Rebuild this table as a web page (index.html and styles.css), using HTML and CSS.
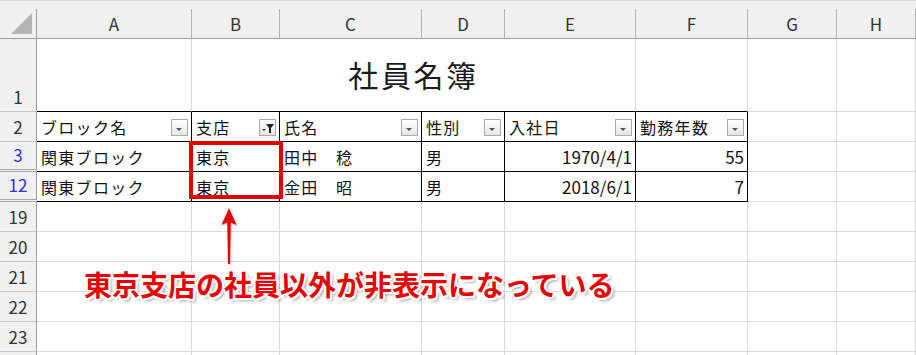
FILE: index.html
```html
<!DOCTYPE html>
<html lang="ja">
<head>
  <meta charset="UTF-8" />
  <meta name="viewport" content="width=device-width, initial-scale=1.0" />
  <title>社員名簿</title>
  <link rel="stylesheet" href="styles.css">
</head>
<body>
  <div class="sheet">
    <div class="grid">
      <!-- 上の余白と列見出し -->
      <div class="strip"></div>
      <div class="corner">
        <svg width="22" height="22" viewBox="0 0 22 22"><polygon points="0,21 21,0 21,21" fill="#b4b4b4"/></svg>
      </div>
      <div class="ch">A</div>
      <div class="ch">B</div>
      <div class="ch">C</div>
      <div class="ch">D</div>
      <div class="ch">E</div>
      <div class="ch">F</div>
      <div class="ch">G</div>
      <div class="ch">H</div>

      <!-- 1行目: タイトル (B1:E1 結合) -->
      <div class="rh">1</div>
      <div class="c top"></div>
      <div class="c top title">社員名簿</div>
      <div class="c top"></div>
      <div class="c"></div>
      <div class="c"></div>

      <!-- 2行目: 見出し + フィルターボタン -->
      <div class="rh">2</div>
      <div class="c t head">ブロック名<span class="fbtn"><svg width="15" height="15" viewBox="0 0 15 15"><polygon points="4,8 10,8 7,11" fill="#555"/></svg></span></div>
      <div class="c t head">支店<span class="fbtn"><svg width="15" height="15" viewBox="0 0 15 15"><polygon points="2,9 6,9 4,11" fill="#333"/><polygon points="6,4 14,4 11,8 11,13 9,13 9,8" fill="#222"/></svg></span></div>
      <div class="c t head">氏名<span class="fbtn"><svg width="15" height="15" viewBox="0 0 15 15"><polygon points="4,8 10,8 7,11" fill="#555"/></svg></span></div>
      <div class="c t head">性別<span class="fbtn"><svg width="15" height="15" viewBox="0 0 15 15"><polygon points="4,8 10,8 7,11" fill="#555"/></svg></span></div>
      <div class="c t head">入社日<span class="fbtn"><svg width="15" height="15" viewBox="0 0 15 15"><polygon points="4,8 10,8 7,11" fill="#555"/></svg></span></div>
      <div class="c t head">勤務年数<span class="fbtn"><svg width="15" height="15" viewBox="0 0 15 15"><polygon points="4,8 10,8 7,11" fill="#555"/></svg></span></div>
      <div class="c"></div>
      <div class="c"></div>

      <!-- データ行 (4〜11行目は非表示) -->
      <div class="rh shown hid">3</div>
      <div class="c t">関東ブロック</div>
      <div class="c t">東京</div>
      <div class="c t">田中　稔</div>
      <div class="c t">男</div>
      <div class="c t num">1970/4/1</div>
      <div class="c t num">55</div>
      <div class="c"></div>
      <div class="c"></div>

      <div class="rh shown hid">12</div>
      <div class="c t">関東ブロック</div>
      <div class="c t">東京</div>
      <div class="c t">金田　昭</div>
      <div class="c t">男</div>
      <div class="c t num">2018/6/1</div>
      <div class="c t num">7</div>
      <div class="c"></div>
      <div class="c"></div>

      <div class="rh">19</div>
      <div class="c"></div><div class="c"></div><div class="c"></div><div class="c"></div>
      <div class="c"></div><div class="c"></div><div class="c"></div><div class="c"></div>

      <div class="rh">20</div>
      <div class="c"></div><div class="c"></div><div class="c"></div><div class="c"></div>
      <div class="c"></div><div class="c"></div><div class="c"></div><div class="c"></div>

      <div class="rh">21</div>
      <div class="c"></div><div class="c"></div><div class="c"></div><div class="c"></div>
      <div class="c"></div><div class="c"></div><div class="c"></div><div class="c"></div>

      <div class="rh">22</div>
      <div class="c"></div><div class="c"></div><div class="c"></div><div class="c"></div>
      <div class="c"></div><div class="c"></div><div class="c"></div><div class="c"></div>

      <div class="rh">23</div>
      <div class="c"></div><div class="c"></div><div class="c"></div><div class="c"></div>
      <div class="c"></div><div class="c"></div><div class="c"></div><div class="c"></div>

      <!-- 画面下端で切れる行 -->
      <div class="rh"></div>
      <div class="c"></div><div class="c"></div><div class="c"></div><div class="c"></div>
      <div class="c"></div><div class="c"></div><div class="c"></div><div class="c"></div>
    </div>

    <!-- 注釈 -->
    <div class="mark"></div>
    <svg class="arrow" width="20" height="62" viewBox="0 0 20 62">
      <polygon points="10,1 17.5,18 11.7,15.5 11,57 9,57 8.3,15.5 2.5,18" fill="#e60000"/>
    </svg>
    <p class="note">東京支店の社員以外が非表示になっている</p>
  </div>
</body>
</html>
```

FILE: styles.css
```css
html, body {
  margin: 0;
  padding: 0;
  background: #fff;
  overflow: hidden;
}

body {
  font-family: "Noto Sans CJK JP", "Noto Sans", sans-serif;
  color: #111;
}

.sheet {
  position: relative;
  width: 916px;
  height: 355px;
  overflow: hidden;
}

.grid {
  display: grid;
  grid-template-columns: 37px 155px 88px 142px 83px 131px 112px 89px 1fr;
  grid-template-rows: 9px 30px 73px repeat(8, 30px);
}

.grid > div {
  box-sizing: border-box;
}

.strip {
  grid-column: 1 / -1;
  background: #f0f0f0;
  border-top: 1px solid #d9d9d9;
}

/* 左上の角 */
.corner {
  background: #f0f0f0;
  border-right: 1px solid #9e9e9e;
  border-bottom: 1px solid #9e9e9e;
  display: flex;
  justify-content: flex-end;
  align-items: flex-end;
  padding: 0 3px 3px 0;
}

.corner svg {
  display: block;
}

/* 列見出し */
.ch {
  background: #f0f0f0;
  border-right: 1px solid #b4b4b4;
  border-bottom: 1px solid #9e9e9e;
  display: flex;
  align-items: center;
  justify-content: center;
  font-size: 17px;
  line-height: 1;
  color: #333;
}

/* 行番号 */
.rh {
  background: #f0f0f0;
  border-right: 1px solid #9e9e9e;
  border-bottom: 1px solid #c8c8c8;
  display: flex;
  align-items: flex-end;
  justify-content: center;
  padding-bottom: 6px;
  font-size: 17px;
  line-height: 1;
  color: #333;
}

.rh.shown {
  color: #2b2bff;
}

.rh.hid {
  border-bottom: 3px double #a8a8a8;
}

/* セル */
.c {
  border-right: 1px solid #dadada;
  border-bottom: 1px solid #dadada;
  display: flex;
  align-items: center;
  padding: 0 4px;
  font-size: 16px;
  letter-spacing: 1.3px;
  line-height: 1;
  white-space: nowrap;
}

.c.top {
  border-bottom-color: #000;
}

.c.t {
  border-right-color: #000;
  border-bottom-color: #000;
}

.c.num {
  justify-content: flex-end;
  font-size: 17px;
  letter-spacing: 0;
  padding-right: 3px;
}

.title {
  grid-column: span 4;
  justify-content: center;
  font-size: 30px;
  letter-spacing: 2.6px;
  padding-bottom: 3px;
  color: #1a1a1a;
}

/* フィルターボタン */
.head {
  padding-right: 3px;
}

.fbtn {
  margin-left: auto;
  align-self: flex-end;
  margin-bottom: 5px;
  width: 17px;
  height: 17px;
  box-sizing: border-box;
  border: 1px solid #a9a9a9;
  background: linear-gradient(#ffffff, #e6e6e6);
}

.fbtn svg {
  display: block;
}

/* 赤枠・矢印・コメント */
.mark {
  position: absolute;
  left: 189px;
  top: 141px;
  width: 94px;
  height: 58px;
  box-sizing: border-box;
  border: 4px solid #e00000;
}

.arrow {
  position: absolute;
  left: 219px;
  top: 207px;
  filter: drop-shadow(1px 1px 1px rgba(0,0,0,0.25));
}

.note {
  position: absolute;
  left: 84px;
  top: 270px;
  margin: 0;
  font-size: 28px;
  font-weight: 700;
  line-height: 1;
  white-space: nowrap;
  color: #e60000;
  text-shadow:
    2px 0 #fff, -2px 0 #fff, 0 2px #fff, 0 -2px #fff,
    1.5px 1.5px #fff, -1.5px 1.5px #fff, 1.5px -1.5px #fff, -1.5px -1.5px #fff,
    3px 3px 3px rgba(0,0,0,0.35);
}
```
